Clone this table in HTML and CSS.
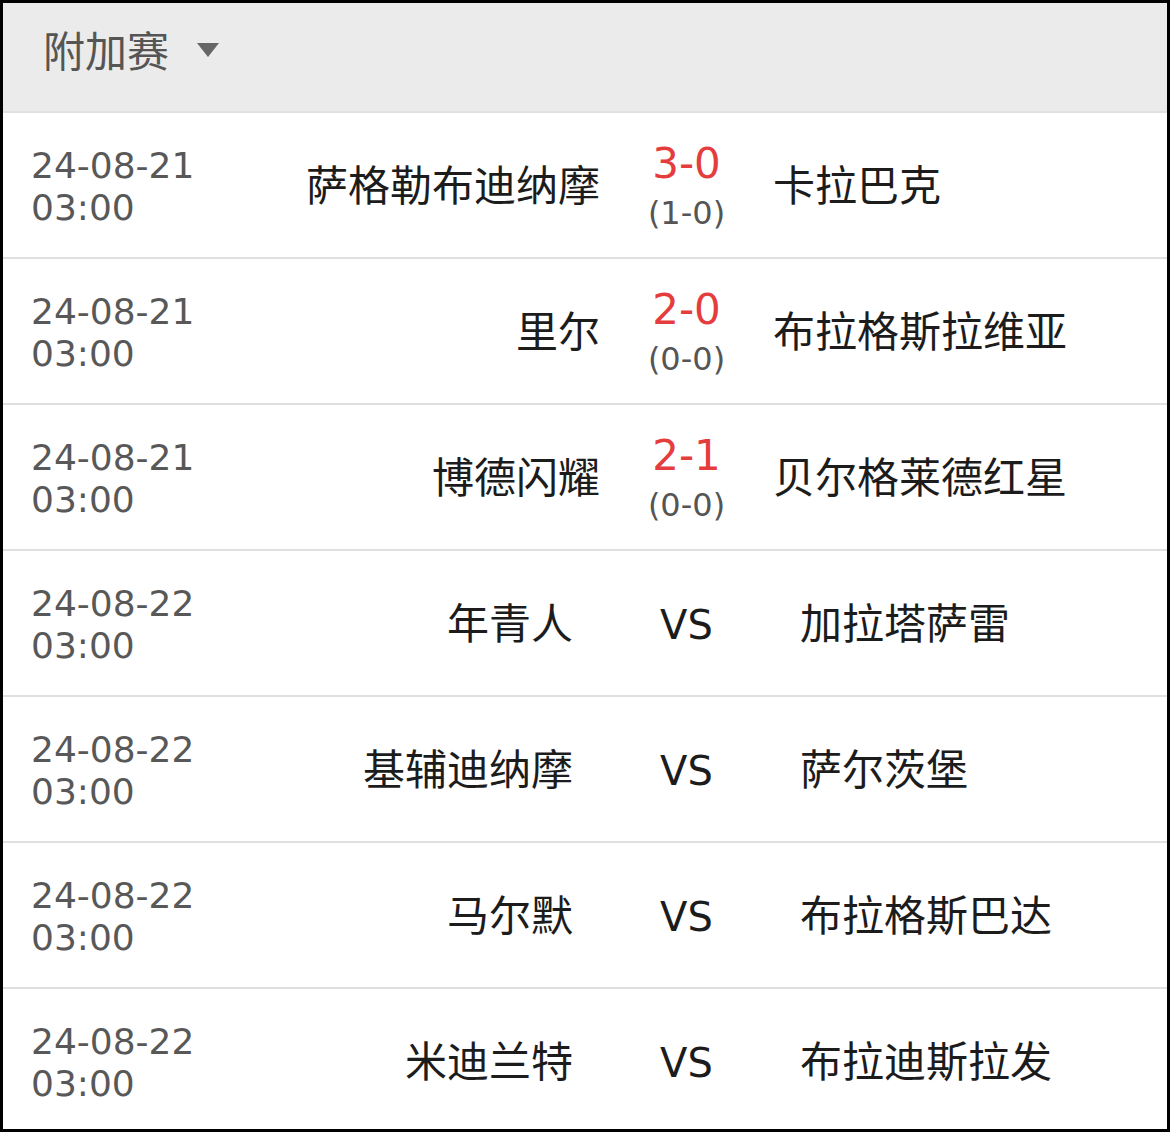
FILE: index.html
```html
<!DOCTYPE html>
<html lang="zh">
<head>
<meta charset="utf-8">
<title>附加赛</title>
<link rel="stylesheet" href="styles.css">
</head>
<body>
<div class="frame">
  <div class="header">
    <span class="title">附加赛</span>
    <span class="caret"></span>
  </div>
  <div class="list">
    <div class="row played">
      <div class="date"><div>24-08-21</div><div>03:00</div></div>
      <div class="home">萨格勒布迪纳摩</div>
      <div class="center"><div class="score">3-0</div><div class="half">(1-0)</div></div>
      <div class="away">卡拉巴克</div>
    </div>
    <div class="row played">
      <div class="date"><div>24-08-21</div><div>03:00</div></div>
      <div class="home">里尔</div>
      <div class="center"><div class="score">2-0</div><div class="half">(0-0)</div></div>
      <div class="away">布拉格斯拉维亚</div>
    </div>
    <div class="row played">
      <div class="date"><div>24-08-21</div><div>03:00</div></div>
      <div class="home">博德闪耀</div>
      <div class="center"><div class="score">2-1</div><div class="half">(0-0)</div></div>
      <div class="away">贝尔格莱德红星</div>
    </div>
    <div class="row upcoming">
      <div class="date"><div>24-08-22</div><div>03:00</div></div>
      <div class="home">年青人</div>
      <div class="center"><div class="vs">VS</div></div>
      <div class="away">加拉塔萨雷</div>
    </div>
    <div class="row upcoming">
      <div class="date"><div>24-08-22</div><div>03:00</div></div>
      <div class="home">基辅迪纳摩</div>
      <div class="center"><div class="vs">VS</div></div>
      <div class="away">萨尔茨堡</div>
    </div>
    <div class="row upcoming">
      <div class="date"><div>24-08-22</div><div>03:00</div></div>
      <div class="home">马尔默</div>
      <div class="center"><div class="vs">VS</div></div>
      <div class="away">布拉格斯巴达</div>
    </div>
    <div class="row upcoming">
      <div class="date"><div>24-08-22</div><div>03:00</div></div>
      <div class="home">米迪兰特</div>
      <div class="center"><div class="vs">VS</div></div>
      <div class="away">布拉迪斯拉发</div>
    </div>
  </div>
</div>
</body>
</html>
```
FILE: styles.css
```css
* { box-sizing: border-box; }
html, body { margin: 0; padding: 0; background: #000; }
body { font-family: "DejaVu Sans", "Noto Sans CJK SC", sans-serif; }

.frame {
  width: 1170px;
  height: 1132px;
  border: 3px solid #000;
  background: #fff;
  overflow: hidden;
}

.header {
  height: 110px;
  background: #ebebeb;
  border-bottom: 2px solid #e0e0e0;
  display: flex;
  align-items: center;
  padding-left: 40px;
  padding-bottom: 16px;
}
.title {
  font-family: "Noto Sans CJK SC", sans-serif;
  font-size: 42px;
  color: #555;
  line-height: 1;
}
.caret {
  margin-left: 28px;
  margin-top: 2px;
  width: 0;
  height: 0;
  border-left: 11.5px solid transparent;
  border-right: 11.5px solid transparent;
  border-top: 14px solid #666;
}

.row {
  height: 146px;
  border-bottom: 2px solid #e0e0e0;
  display: grid;
  align-items: center;
  padding-left: 28px;
  padding-top: 3px;
}
.row.played { grid-template-columns: 240px 329px 173px 1fr; }
.row.upcoming { grid-template-columns: 240px 302px 227px 1fr; }

.date {
  font-size: 36px;
  line-height: 42px;
  color: #585858;
}
.home, .away {
  font-family: "Noto Sans CJK SC", sans-serif;
  font-size: 42px;
  color: #1c1c1c;
  white-space: nowrap;
  margin-bottom: 8px;
}
.home { text-align: right; }
.center { text-align: center; }
.score {
  font-size: 42px;
  line-height: 50px;
  color: #e53d3d;
}
.half {
  font-size: 32px;
  line-height: 44px;
  margin-top: 2px;
  color: #555;
}
.vs {
  font-size: 40px;
  color: #1c1c1c;
}
```
